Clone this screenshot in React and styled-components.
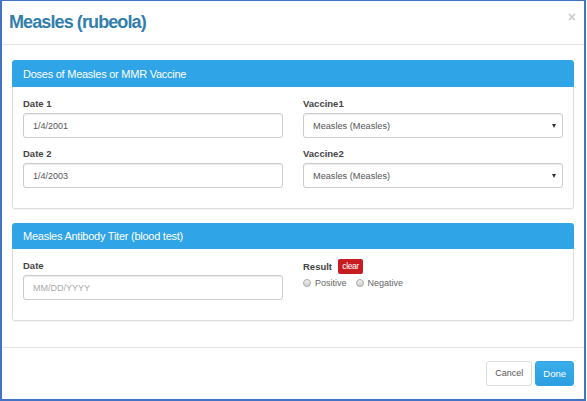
import styled, { createGlobalStyle } from 'styled-components';

const GlobalStyle = createGlobalStyle`
  html, body {
    margin: 0;
    padding: 0;
    background: #fff;
  }
  body {
    font-family: "Liberation Sans", Arial, sans-serif;
    color: #555;
  }
`;

const Frame = styled.div`
  width: 586px;
  height: 401px;
  box-sizing: border-box;
  border: 2px solid #4472c4;
  border-top-width: 1px;
  display: flex;
  flex-direction: column;
  background: #fff;
`;

const Header = styled.div`
  height: 44px;
  box-sizing: border-box;
  border-bottom: 1px solid #e5e5e5;
  padding: 0 8px 0 7px;
  display: flex;
  align-items: center;
  justify-content: space-between;
  position: relative;
`;

const Title = styled.h4`
  margin: 0;
  font-size: 18px;
  font-weight: bold;
  color: #317eac;
  letter-spacing: -0.9px;
`;

const Close = styled.span`
  position: absolute;
  right: 8px;
  top: 8px;
  font-size: 14px;
  font-weight: bold;
  color: #000;
  opacity: 0.2;
`;

const Body = styled.div`
  padding: 15px 10px 0;
  display: flex;
  flex-direction: column;
  gap: 14px;
  flex: 1;
`;

const Panel = styled.div`
  border: 1px solid #ddd;
  border-radius: 3px;
  box-shadow: 0 1px 1px rgba(0, 0, 0, 0.05);
`;

const PanelHeading = styled.div`
  height: ${p => p.$h}px;
  box-sizing: border-box;
  background: #2fa4e7;
  border: 1px solid #2fa4e7;
  margin: -1px -1px 0;
  border-radius: 3px 3px 0 0;
  color: #fff;
  font-size: 11px;
  letter-spacing: -0.25px;
  display: flex;
  align-items: center;
  padding: 0 10px;
`;

const PanelBody = styled.div`
  padding: 10px 10px 20px;
  display: grid;
  grid-template-columns: 1fr 1fr;
  column-gap: 20px;
  row-gap: 9px;
`;

const Field = styled.div`
  display: flex;
  flex-direction: column;
`;

const Label = styled.label`
  font-size: 9.5px;
  font-weight: bold;
  color: #444;
  line-height: 14px;
  margin-bottom: 2px;
  display: flex;
  align-items: center;
  gap: 6px;
`;

const Input = styled.input`
  height: 25px;
  box-sizing: border-box;
  border: 1px solid #ccc;
  border-radius: 3px;
  padding: 0 9px;
  font-family: "Liberation Sans", Arial, sans-serif;
  font-size: 9px;
  color: #555;
  box-shadow: inset 0 1px 1px rgba(0, 0, 0, 0.075);
  &::placeholder {
    color: #aaa;
  }
`;

const SelectWrap = styled.div`
  position: relative;
`;

const Select = styled.select`
  width: 100%;
  height: 25px;
  box-sizing: border-box;
  border: 1px solid #ccc;
  border-radius: 3px;
  padding: 0 9px;
  font-family: "Liberation Sans", Arial, sans-serif;
  font-size: 9.2px;
  color: #555;
  background: #fff;
  appearance: none;
  box-shadow: inset 0 1px 1px rgba(0, 0, 0, 0.075);
`;

const Caret = styled.span`
  position: absolute;
  right: 7px;
  top: 11px;
  width: 0;
  height: 0;
  border-left: 2.5px solid transparent;
  border-right: 2.5px solid transparent;
  border-top: 4px solid #333;
  pointer-events: none;
`;

const Badge = styled.span`
  background: #c71c22;
  color: #fff;
  font-weight: normal;
  font-size: 8.5px;
  width: 25px;
  height: 15px;
  line-height: 15px;
  text-align: center;
  border-radius: 2px;
  letter-spacing: -0.4px;
`;

const Radios = styled.div`
  display: flex;
  gap: 9px;
  font-size: 9px;
  color: #666;
  margin-top: 2px;
`;

const RadioOption = styled.label`
  display: flex;
  align-items: center;
  gap: 4px;
`;

const RadioDot = styled.span`
  width: 6px;
  height: 6px;
  border-radius: 50%;
  border: 1px solid #aaa;
  background: linear-gradient(#f2f2f2, #ccc);
`;

const Footer = styled.div`
  height: 52px;
  box-sizing: border-box;
  border-top: 1px solid #e5e5e5;
  display: flex;
  align-items: center;
  justify-content: flex-end;
  gap: 3px;
  padding: 0 10px 1px;
`;

const Button = styled.button`
  height: 25px;
  box-sizing: border-box;
  border-radius: 3px;
  font-family: "Liberation Sans", Arial, sans-serif;
  font-size: ${p => (p.$primary ? 9.5 : 9)}px;
  padding: 0 ${p => (p.$primary ? 7 : 8)}px;
  border: 1px solid ${p => (p.$primary ? '#2fa4e7' : '#ddd')};
  background: ${p => (p.$primary ? 'linear-gradient(#3aaeeb, #2b9ee0)' : '#fff')};
  color: ${p => (p.$primary ? '#fff' : '#555')};
`;

const App = () => {
  return (
    <Frame>
      <GlobalStyle />
      <Header>
        <Title>Measles (rubeola)</Title>
        <Close>×</Close>
      </Header>
      <Body>
        <Panel>
          <PanelHeading $h={27}>Doses of Measles or MMR Vaccine</PanelHeading>
          <PanelBody>
            <Field>
              <Label>Date 1</Label>
              <Input defaultValue="1/4/2001" />
            </Field>
            <Field>
              <Label>Vaccine1</Label>
              <SelectWrap>
                <Select defaultValue="m">
                  <option value="m">Measles (Measles)</option>
                </Select>
                <Caret />
              </SelectWrap>
            </Field>
            <Field>
              <Label>Date 2</Label>
              <Input defaultValue="1/4/2003" />
            </Field>
            <Field>
              <Label>Vaccine2</Label>
              <SelectWrap>
                <Select defaultValue="m">
                  <option value="m">Measles (Measles)</option>
                </Select>
                <Caret />
              </SelectWrap>
            </Field>
          </PanelBody>
        </Panel>
        <Panel>
          <PanelHeading $h={26}>Measles Antibody Titer (blood test)</PanelHeading>
          <PanelBody>
            <Field>
              <Label>Date</Label>
              <Input placeholder="MM/DD/YYYY" />
            </Field>
            <Field>
              <Label>
                Result <Badge>clear</Badge>
              </Label>
              <Radios>
                <RadioOption><RadioDot />Positive</RadioOption>
                <RadioOption><RadioDot />Negative</RadioOption>
              </Radios>
            </Field>
          </PanelBody>
        </Panel>
      </Body>
      <Footer>
        <Button>Cancel</Button>
        <Button $primary>Done</Button>
      </Footer>
    </Frame>
  );
};

export default App;
